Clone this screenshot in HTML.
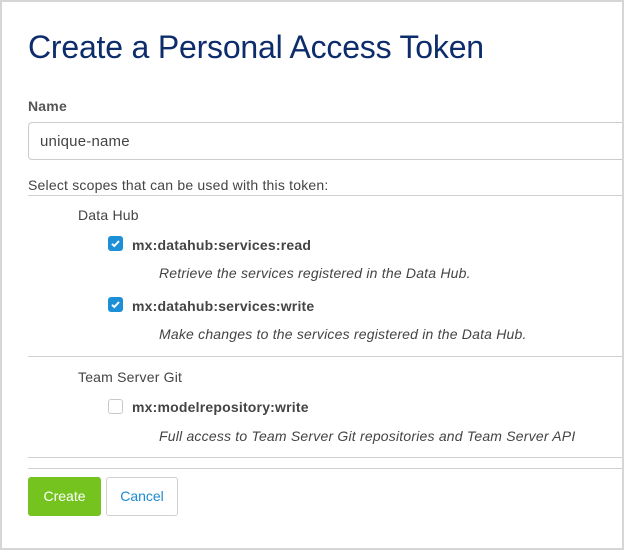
<!DOCTYPE html>
<html><head><style>
*{box-sizing:border-box;margin:0;padding:0}
body{width:624px;height:550px;background:#fff;font-family:"Liberation Sans",sans-serif;color:#333;position:relative;overflow:hidden}
.frame{position:absolute;left:0;top:0;width:624px;height:550px;border:2px solid #d6d6d6}
.a{position:absolute;white-space:nowrap;letter-spacing:0.2px}
h1{position:absolute;left:28px;top:29px;font-size:32px;font-weight:normal;color:#0d2c6c;letter-spacing:-0.2px}
.line{position:absolute;left:28px;right:2px;height:1px;background:#d0d0d0}
.cb{position:absolute;width:15px;height:15px;border-radius:3px}
.cb.on{background:#1d8fd6}
.cb.off{border:1px solid #c8c8c8;background:#fff}
.bold{font-weight:bold;font-size:14px;color:#444}
.it{font-style:italic;font-size:14px;color:#444}
.btn{position:absolute;top:477px;height:39px;border-radius:3px;font-size:14px;text-align:center;line-height:39px}
</style></head><body>
<div class="frame"></div>
<h1>Create a Personal Access Token</h1>
<div class="a bold" style="left:28px;top:98px;color:#555">Name</div>
<div class="a" style="left:28px;top:122px;width:594px;height:38px;border:1px solid #ccc;border-right:none;border-radius:4px 0 0 4px;font-size:15px;padding:10px 11px;color:#444">unique-name</div>
<div class="a" style="left:28px;top:177px;font-size:14px;color:#444">Select scopes that can be used with this token:</div>
<div class="line" style="top:195px"></div>
<div class="a" style="left:78px;top:207px;font-size:14px;color:#444">Data Hub</div>
<div class="cb on" style="left:108px;top:236px"><svg width="15" height="15"><path d="M4 7.8l2.3 2.2L11 5" stroke="#fff" stroke-width="2" fill="none"/></svg></div>
<div class="a bold" style="left:132px;top:237px">mx:datahub:services:read</div>
<div class="a it" style="left:159px;top:265px">Retrieve the services registered in the Data Hub.</div>
<div class="cb on" style="left:108px;top:297px"><svg width="15" height="15"><path d="M4 7.8l2.3 2.2L11 5" stroke="#fff" stroke-width="2" fill="none"/></svg></div>
<div class="a bold" style="left:132px;top:298px">mx:datahub:services:write</div>
<div class="a it" style="left:159px;top:326px">Make changes to the services registered in the Data Hub.</div>
<div class="line" style="top:356px"></div>
<div class="a" style="left:78px;top:369px;font-size:14px;color:#444">Team Server Git</div>
<div class="cb off" style="left:108px;top:399px"></div>
<div class="a bold" style="left:132px;top:399px">mx:modelrepository:write</div>
<div class="a it" style="left:159px;top:428px">Full access to Team Server Git repositories and Team Server API</div>
<div class="line" style="top:457px"></div>
<div class="line" style="top:468px"></div>
<div class="btn" style="left:28px;width:73px;background:#74c31f;color:#fff">Create</div>
<div class="btn" style="left:106px;width:72px;border:1px solid #d0d0d0;color:#1a8ad4;line-height:37px">Cancel</div>
</body></html>
